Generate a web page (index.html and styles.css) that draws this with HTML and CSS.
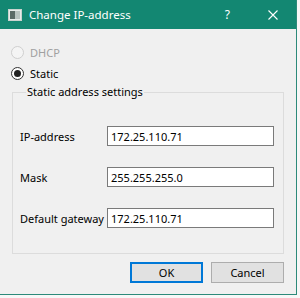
FILE: index.html
```html
<!DOCTYPE html>
<html lang="en">

<head>
    <meta charset="UTF-8">
    <title>Change IP-address</title>
    <link rel="stylesheet" href="styles.css">
</head>

<body>
    <div class="window">
        <div class="title-bar">
            <svg class="app-icon" width="14" height="12" viewBox="0 0 14 12">
                <rect x="0.5" y="0.5" width="13" height="11" fill="#e8ecea" stroke="#c9d3cf" />
                <rect x="2" y="2" width="5" height="8" fill="#5b6b66" />
                <rect x="7" y="2" width="5" height="8" fill="#b9c4c0" />
            </svg>
            <span class="title">Change IP-address</span>
            <span class="help">?</span>
            <svg class="close" width="10" height="10" viewBox="0 0 10 10">
                <path d="M0.5 0.5 L9.5 9.5 M9.5 0.5 L0.5 9.5" stroke="#fff" stroke-width="1.1" fill="none" />
            </svg>
        </div>

        <div class="content">
            <label class="radio disabled">
                <input type="radio" name="mode" disabled>
                <span>DHCP</span>
            </label>
            <label class="radio">
                <input type="radio" name="mode" checked>
                <span>Static</span>
            </label>

            <fieldset class="group">
                <legend>Static address settings</legend>
                <div class="form-grid">
                    <label>IP-address</label>
                    <input class="field" type="text" value="172.25.110.71">
                    <label>Mask</label>
                    <input class="field" type="text" value="255.255.255.0">
                    <label>Default gateway</label>
                    <input class="field" type="text" value="172.25.110.71">
                </div>
            </fieldset>

            <div class="buttons">
                <button class="btn default">OK</button>
                <button class="btn">Cancel</button>
            </div>
        </div>
    </div>
</body>

</html>
```

FILE: styles.css
```css
* {
    margin: 0;
    padding: 0;
    box-sizing: border-box;
}

body {
    background: #f7f7f7;
    font-family: 'Noto Sans', 'Liberation Sans', sans-serif;
    font-size: 11px;
    color: #000;
}

.window {
    width: 297px;
    height: 295px;
    background: #f0f0f0;
    border-right: 1px solid #2c8a7a;
    border-bottom: 1px solid #2c8a7a;
}

.title-bar {
    height: 29px;
    background: #138772;
    color: #fff;
    display: flex;
    align-items: center;
    padding-left: 8px;
}

.app-icon {
    margin-right: 7px;
}

.title {
    font-size: 11.5px;
    flex: 1;
}

.help {
    font-size: 12px;
    margin-right: 38px;
}

.close {
    margin-right: 18px;
}

.content {
    padding: 13px 12px 0 11px;
}

.radio {
    display: flex;
    align-items: center;
    height: 21px;
    gap: 6px;
}

.radio input {
    appearance: none;
    width: 13px;
    height: 13px;
    border: 1px solid #333;
    border-radius: 50%;
    background: #fff;
    display: grid;
    place-items: center;
}

.radio input:checked::after {
    content: '';
    width: 7px;
    height: 7px;
    border-radius: 50%;
    background: #222;
}

.radio.disabled {
    color: #a0a0a0;
}

.radio.disabled input {
    border-color: #cfcfcf;
    background: #f4f4f4;
}

.group {
    margin-left: 1px;
    border: 1px solid #dcdcdc;
    padding: 26px 9px 25px 7px;
}

.group legend {
    line-height: 16px;
    padding: 0 1px;
    margin-left: 6px;
}

.form-grid {
    display: grid;
    grid-template-columns: 87px 167px;
    row-gap: 21px;
    align-items: center;
    white-space: nowrap;
}

.field {
    height: 20px;
    border: 1px solid #7a7a7a;
    background: #fff;
    font: inherit;
    padding: 0 3px;
    outline: none;
}

.buttons {
    display: flex;
    justify-content: flex-end;
    gap: 8px;
    margin-top: 8px;
}

.btn {
    width: 73px;
    height: 21px;
    font: inherit;
    background: #e1e1e1;
    border: 1px solid #adadad;
}

.btn.default {
    border: 2px solid #0078d7;
}
```
